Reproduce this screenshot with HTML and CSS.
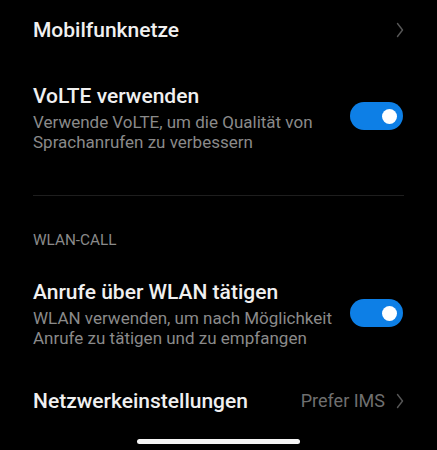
FILE: index.html
```html
<!DOCTYPE html>
<html lang="de">
<head>
<meta charset="utf-8">
<link rel="stylesheet" href="styles.css">
</head>
<body>
<div class="screen">
  <div class="nav-row first">
    <span class="title">Mobilfunknetze</span>
    <span class="right">
      <svg class="chev" viewBox="0 0 8 16" width="8" height="16"><path d="M1.5 1.5 L6.5 8 L1.5 14.5" fill="none" stroke="#575757" stroke-width="1.4" stroke-linecap="round" stroke-linejoin="round"/></svg>
    </span>
  </div>

  <div class="toggle-row volte">
    <div class="texts">
      <div class="title">VoLTE verwenden</div>
      <div class="sub">Verwende VoLTE, um die Qualität von<br>Sprachanrufen zu verbessern</div>
    </div>
    <div class="switch on"><span class="knob"></span></div>
  </div>

  <div class="divider"></div>

  <div class="section">WLAN-CALL</div>

  <div class="toggle-row wlan">
    <div class="texts">
      <div class="title">Anrufe über WLAN tätigen</div>
      <div class="sub">WLAN verwenden, um nach Möglichkeit<br>Anrufe zu tätigen und zu empfangen</div>
    </div>
    <div class="switch on"><span class="knob"></span></div>
  </div>

  <div class="nav-row last">
    <span class="title">Netzwerkeinstellungen</span>
    <span class="right">
      <span class="value">Prefer IMS</span>
      <svg class="chev" viewBox="0 0 8 16" width="8" height="16"><path d="M1.5 1.5 L6.5 8 L1.5 14.5" fill="none" stroke="#575757" stroke-width="1.4" stroke-linecap="round" stroke-linejoin="round"/></svg>
    </span>
  </div>

  <div class="home-wrap"><div class="home-bar"></div></div>
</div>
</body>
</html>
```

FILE: styles.css
```css
html, body {
  margin: 0;
  padding: 0;
  background: #000;
}
body {
  font-family: Roboto, "Noto Sans", "Liberation Sans", sans-serif;
  color: #f2f2f2;
  width: 437px;
  height: 450px;
  overflow: hidden;
}
.screen {
  padding: 0 33px 0 33px;
}
.title {
  font-size: 21px;
  line-height: 24px;
  font-weight: 500;
  color: #f0f0f0;
}
.nav-row {
  display: flex;
  align-items: center;
  justify-content: space-between;
  height: 24px;
}
.nav-row.first {
  margin-top: 18px;
}
.nav-row.last {
  margin-top: 41px;
}
.right {
  display: flex;
  align-items: center;
  gap: 11px;
}
.value {
  font-size: 18px;
  color: #6f6f6f;
  line-height: 24px;
}
.chev {
  display: block;
}
.toggle-row {
  display: flex;
  align-items: center;
  justify-content: space-between;
}
.toggle-row.volte {
  margin-top: 42px;
}
.toggle-row.wlan {
  margin-top: 31px;
}
.texts .sub {
  margin-top: 4px;
  font-size: 17px;
  line-height: 20px;
  color: #8a8a8a;
}
.switch {
  width: 53px;
  height: 28px;
  border-radius: 14px;
  background: #0d7fe6;
  display: flex;
  align-items: center;
  justify-content: flex-end;
  padding-right: 6px;
  box-sizing: border-box;
  flex: none;
  margin-right: 1px;
}
.knob {
  width: 15px;
  height: 15px;
  border-radius: 50%;
  background: #fff;
}
.toggle-row.volte .switch { margin-top: -4px; }
.toggle-row.wlan .switch { margin-top: -2px; }
.divider {
  margin-top: 43px;
  height: 1px;
  background: #1e1e1e;
}
.section {
  margin-top: 35px;
  font-size: 15.3px;
  line-height: 18px;
  color: #8a8a8a;
}
.home-wrap {
  display: flex;
  justify-content: center;
  margin-top: 26px;
}
.home-bar {
  width: 163px;
  height: 5px;
  border-radius: 3px;
  background: #f5f5f5;
}
```
